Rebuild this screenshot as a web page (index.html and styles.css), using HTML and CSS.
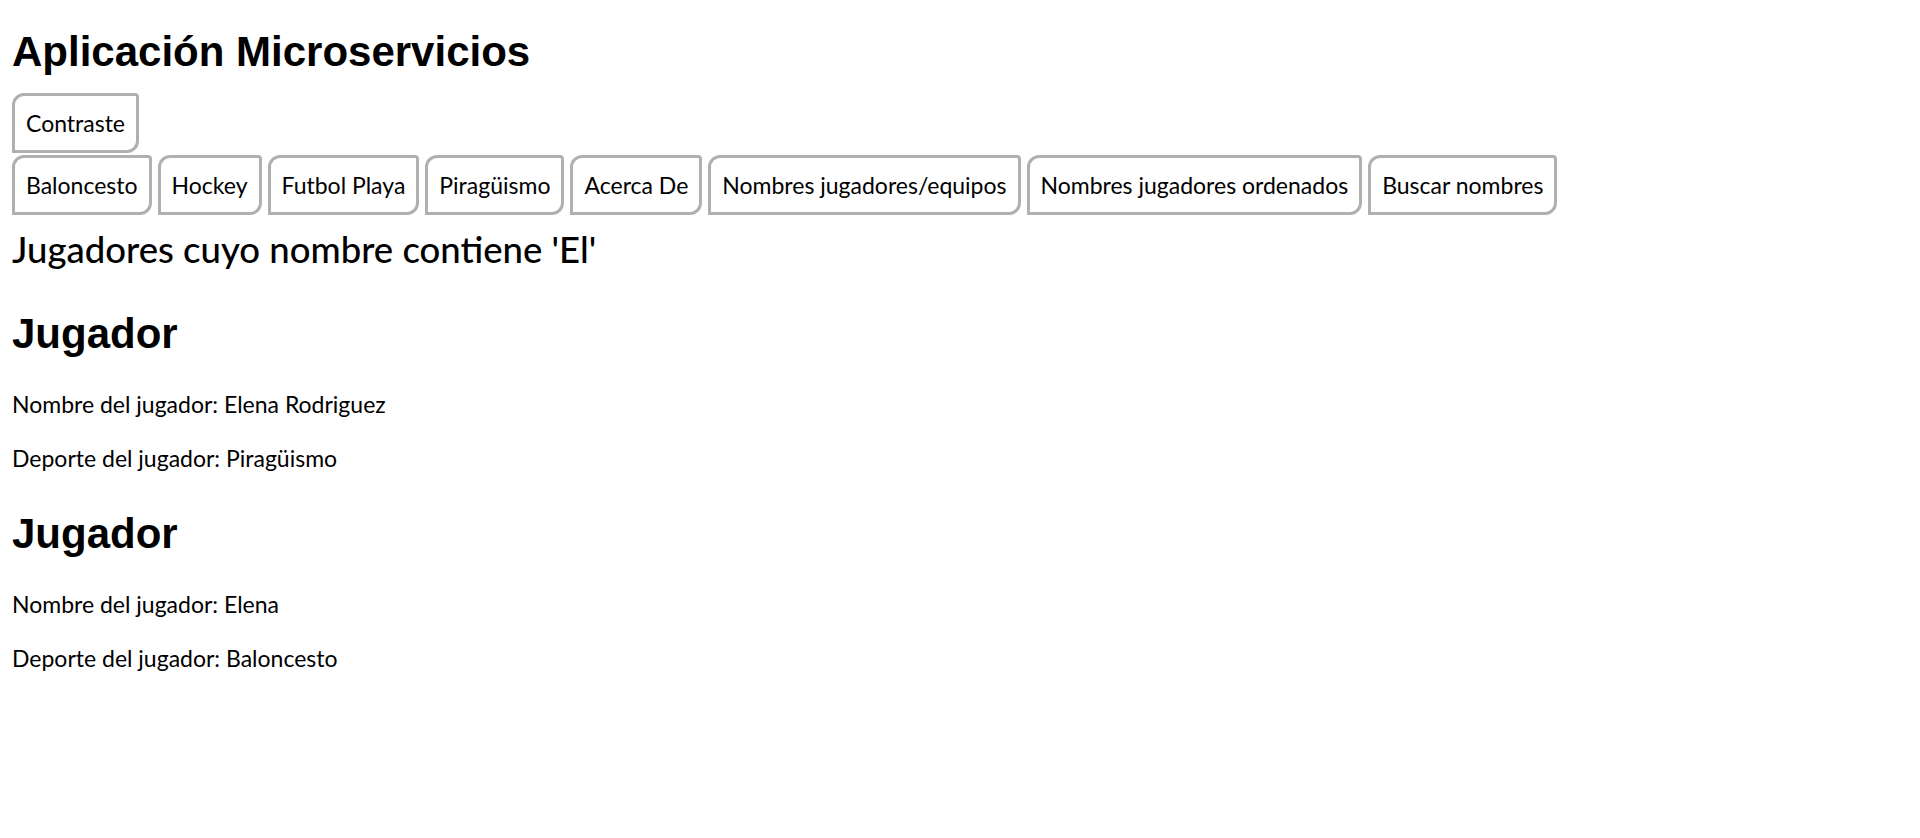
FILE: index.html
```html
<!DOCTYPE html>
<html lang="es">
<head>
<meta charset="utf-8">
<title>Aplicación Microservicios</title>
<link rel="stylesheet" href="styles.css">
</head>
<body>
  <h1 class="title">Aplicación Microservicios</h1>
  <div class="toolbar">
    <button class="btn">Contraste</button>
  </div>
  <nav class="toolbar">
    <button class="btn">Baloncesto</button>
    <button class="btn">Hockey</button>
    <button class="btn">Futbol Playa</button>
    <button class="btn">Piragüismo</button>
    <button class="btn">Acerca De</button>
    <button class="btn">Nombres jugadores/equipos</button>
    <button class="btn">Nombres jugadores ordenados</button>
    <button class="btn">Buscar nombres</button>
  </nav>
  <h3 class="subtitle">Jugadores cuyo nombre contiene 'El'</h3>
  <section class="player">
    <h2 class="player-title">Jugador</h2>
    <p class="player-line">Nombre del jugador: Elena Rodriguez</p>
    <p class="player-line">Deporte del jugador: Piragüismo</p>
  </section>
  <section class="player">
    <h2 class="player-title">Jugador</h2>
    <p class="player-line">Nombre del jugador: Elena</p>
    <p class="player-line">Deporte del jugador: Baloncesto</p>
  </section>
</body>
</html>
```
FILE: styles.css
```css
html, body {
  background: #ffffff;
}
body {
  margin: 0;
  padding: 0 12px;
  color: #000000;
  font-family: Lato, "Noto Sans", sans-serif;
  font-size: 23px;
}
.title {
  margin: 28px 0 17px;
  font-family: "Liberation Sans", Arial, sans-serif;
  font-weight: bold;
  font-size: 42px;
  line-height: 48px;
}
.toolbar {
  display: flex;
  flex-wrap: wrap;
  gap: 6px;
  margin-bottom: 2px;
}
.btn {
  font-family: Lato, "Noto Sans", sans-serif;
  font-size: 23px;
  line-height: 30px;
  color: #000000;
  background: #ffffff;
  border: 3px solid #b0b0b0;
  border-radius: 12px 4px 12px 0;
  padding: 12px 11px;
  margin: 0;
  cursor: pointer;
}
.subtitle {
  margin: 12px 0 0;
  font-size: 36.5px;
  font-weight: 500;
  line-height: 44px;
}
.player-title {
  margin: 39px 0 31px;
  font-family: "Liberation Sans", Arial, sans-serif;
  font-weight: bold;
  font-size: 42px;
  line-height: 48px;
}
.player + .player .player-title {
  margin-top: 37px;
}
.player-line {
  margin: 0 0 24px;
  line-height: 30px;
}
```
